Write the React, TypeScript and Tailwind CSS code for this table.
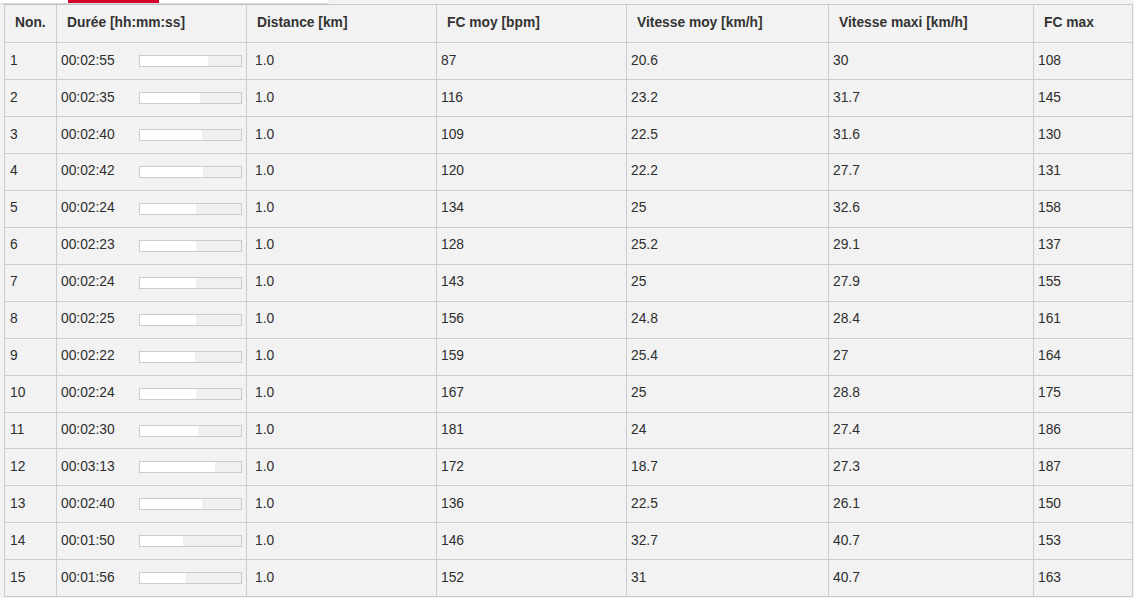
import React from 'react'

const laps = [
  { no: 1, time: '00:02:55', dist: '1.0', hr: 87, speed: '20.6', maxSpeed: '30', maxHr: 108 },
  { no: 2, time: '00:02:35', dist: '1.0', hr: 116, speed: '23.2', maxSpeed: '31.7', maxHr: 145 },
  { no: 3, time: '00:02:40', dist: '1.0', hr: 109, speed: '22.5', maxSpeed: '31.6', maxHr: 130 },
  { no: 4, time: '00:02:42', dist: '1.0', hr: 120, speed: '22.2', maxSpeed: '27.7', maxHr: 131 },
  { no: 5, time: '00:02:24', dist: '1.0', hr: 134, speed: '25', maxSpeed: '32.6', maxHr: 158 },
  { no: 6, time: '00:02:23', dist: '1.0', hr: 128, speed: '25.2', maxSpeed: '29.1', maxHr: 137 },
  { no: 7, time: '00:02:24', dist: '1.0', hr: 143, speed: '25', maxSpeed: '27.9', maxHr: 155 },
  { no: 8, time: '00:02:25', dist: '1.0', hr: 156, speed: '24.8', maxSpeed: '28.4', maxHr: 161 },
  { no: 9, time: '00:02:22', dist: '1.0', hr: 159, speed: '25.4', maxSpeed: '27', maxHr: 164 },
  { no: 10, time: '00:02:24', dist: '1.0', hr: 167, speed: '25', maxSpeed: '28.8', maxHr: 175 },
  { no: 11, time: '00:02:30', dist: '1.0', hr: 181, speed: '24', maxSpeed: '27.4', maxHr: 186 },
  { no: 12, time: '00:03:13', dist: '1.0', hr: 172, speed: '18.7', maxSpeed: '27.3', maxHr: 187 },
  { no: 13, time: '00:02:40', dist: '1.0', hr: 136, speed: '22.5', maxSpeed: '26.1', maxHr: 150 },
  { no: 14, time: '00:01:50', dist: '1.0', hr: 146, speed: '32.7', maxSpeed: '40.7', maxHr: 153 },
  { no: 15, time: '00:01:56', dist: '1.0', hr: 152, speed: '31', maxSpeed: '40.7', maxHr: 163 },
]

const headers = [
  'Non.',
  'Durée [hh:mm:ss]',
  'Distance [km]',
  'FC moy [bpm]',
  'Vitesse moy [km/h]',
  'Vitesse maxi [km/h]',
  'FC max',
]

const widths = [52, 190, 190, 190, 202, 205, 99]

function seconds(t: string) {
  const [h, m, s] = t.split(':').map(Number)
  return h * 3600 + m * 60 + s
}

function DurationBar({ time }: { time: string }) {
  // largeur de remplissage proportionnelle à la durée du tour
  const fill = Math.min(101, seconds(time) / 2.57)
  return (
    <div className="h-[12px] w-[103px] border border-[#cccccc] bg-[#f0f0f0]">
      <div className="h-full bg-white" style={{ width: `${fill}px` }} />
    </div>
  )
}

export default function App() {
  return (
    <div
      className="min-h-[598px] w-full bg-[#f2f2f2] text-[13.8px] text-[#2e2e2e]"
      style={{ fontFamily: '"Liberation Sans", Arial, sans-serif' }}
    >
      {/* onglet actif au-dessus du tableau */}
      <div className="relative h-[4px]">
        <div className="absolute left-0 top-0 h-[3px] w-[328px] bg-white shadow-[0_1px_2px_rgba(0,0,0,0.15)]">
          <div className="ml-[68px] h-[3px] w-[91px] bg-[#d6002a]" />
        </div>
      </div>

      <table className="ml-[4px] table-fixed border-collapse">
        <colgroup>
          {widths.map((w, i) => (
            <col key={i} style={{ width: w }} />
          ))}
        </colgroup>
        <thead>
          <tr className="h-[38px]">
            {headers.map((h) => (
              <th
                key={h}
                className="border border-[#cccccc] px-[10px] pb-[1px] text-left align-middle font-bold text-[#333333]"
              >
                {h}
              </th>
            ))}
          </tr>
        </thead>
        <tbody>
          {laps.map((lap) => (
            <tr key={lap.no} className="h-[36.96px]">
              <td className="border border-[#cccccc] px-[5px] align-middle">{lap.no}</td>
              <td className="border border-[#cccccc] px-[4px] align-middle">
                <div className="flex items-center">
                  <span className="w-[78px]">{lap.time}</span>
                  <DurationBar time={lap.time} />
                </div>
              </td>
              <td className="border border-[#cccccc] px-[8px] align-middle">{lap.dist}</td>
              <td className="border border-[#cccccc] px-[4px] align-middle">{lap.hr}</td>
              <td className="border border-[#cccccc] px-[4px] align-middle">{lap.speed}</td>
              <td className="border border-[#cccccc] px-[4px] align-middle">{lap.maxSpeed}</td>
              <td className="border border-[#cccccc] px-[4px] align-middle">{lap.maxHr}</td>
            </tr>
          ))}
        </tbody>
      </table>
    </div>
  )
}
